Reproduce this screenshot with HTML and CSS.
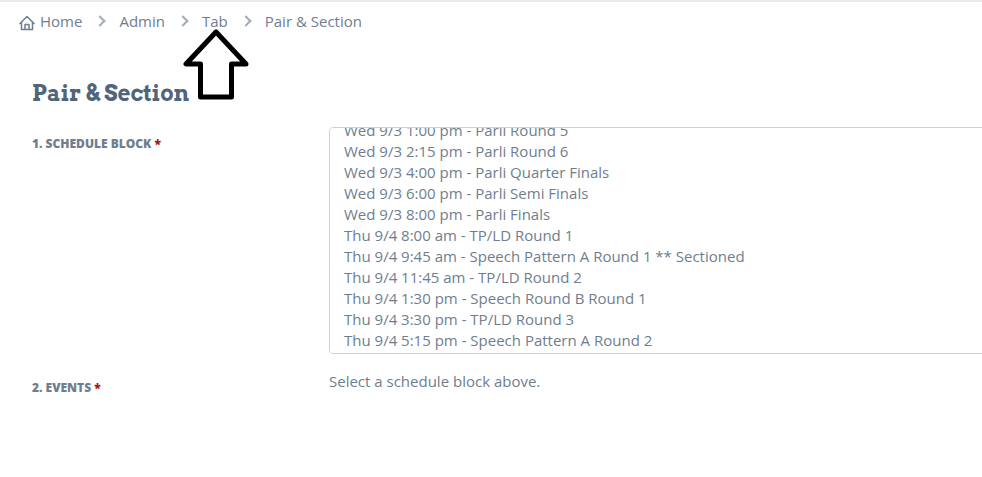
FILE: index.html
```html
<!DOCTYPE html>
<html lang="en">
<head>
  <meta charset="utf-8">
  <title>Pair &amp; Section</title>
  <meta name="viewport" content="width=device-width, initial-scale=1.0">
  <link rel="stylesheet" href="styles.css">
</head>
<body>
  <nav class="breadcrumb" aria-label="Breadcrumb">
    <ol>
      <li>
        <a href="#home">
          <svg class="home-icon" viewBox="0 0 16 16" aria-hidden="true">
            <path d="M1 8.5 L8 1.5 L15 8.5 M2.5 7.5 V14.5 H13.5 V7.500 M6 14 V9.5 H10 V14"/>
          </svg>
          Home
        </a>
      </li>
      <li><a href="#admin">Admin</a></li>
      <li class="marked">
        <a href="#tab">Tab</a>
        <svg class="arrow" viewBox="0 0 66 71" aria-hidden="true">
          <path d="M33 3 L3 35 H17.5 V68 H48.5 V35 H63 Z"/>
        </svg>
      </li>
      <li>Pair &amp; Section</li>
    </ol>
  </nav>

  <main class="content">
    <h1>Pair &amp; Section</h1>
    <form>
      <div class="form-row">
        <label for="scheduleBlock">1. Schedule Block <span class="required">*</span></label>
        <select id="scheduleBlock" class="schedule" multiple>
          <option>Wed 9/3 1:00 pm - Parli Round 5</option>
          <option>Wed 9/3 2:15 pm - Parli Round 6</option>
          <option>Wed 9/3 4:00 pm - Parli Quarter Finals</option>
          <option>Wed 9/3 6:00 pm - Parli Semi Finals</option>
          <option>Wed 9/3 8:00 pm - Parli Finals</option>
          <option>Thu 9/4 8:00 am - TP/LD Round 1</option>
          <option>Thu 9/4 9:45 am - Speech Pattern A Round 1 ** Sectioned</option>
          <option>Thu 9/4 11:45 am - TP/LD Round 2</option>
          <option>Thu 9/4 1:30 pm - Speech Round B Round 1</option>
          <option>Thu 9/4 3:30 pm - TP/LD Round 3</option>
          <option>Thu 9/4 5:15 pm - Speech Pattern A Round 2</option>
        </select>
      </div>
      <div class="form-row">
        <label for="events">2. Events <span class="required">*</span></label>
        <output id="events">Select a schedule block above.</output>
      </div>
    </form>
  </main>

  <script>
    // show the latest blocks first
    var block = document.getElementById('scheduleBlock');
    block.scrollTop = block.scrollHeight;
  </script>
</body>
</html>
```

FILE: styles.css
```css
* {
  box-sizing: border-box;
}

body {
  margin: 0;
  border-top: 2px solid #ebebeb;
  background: #fff;
  color: #6f7e8e;
  font-family: "Open Sans", "Noto Sans", sans-serif;
  font-size: 15px;
  line-height: 20px;
  overflow-x: hidden;
}

a {
  color: inherit;
  text-decoration: none;
}

/* breadcrumb */
.breadcrumb ol {
  display: flex;
  margin: 0;
  padding: 9px 19px 0;
  list-style: none;
}

.breadcrumb li {
  display: flex;
  align-items: center;
}

.breadcrumb li + li::before {
  content: "";
  width: 6px;
  height: 6px;
  margin: 0 15px 0 14px;
  border-top: 2px solid #a3adb7;
  border-right: 2px solid #a3adb7;
  transform: rotate(45deg);
}

.breadcrumb a {
  display: flex;
  align-items: center;
  gap: 5px;
}

.home-icon {
  width: 16px;
  height: 16px;
  margin-top: 3px;
  fill: none;
  stroke: currentColor;
  stroke-width: 1.5;
  stroke-linejoin: round;
  stroke-linecap: round;
}

.marked {
  position: relative;
}

/* pointer drawn over the page, under the Tab link */
.arrow {
  position: absolute;
  top: 18px;
  right: -21px;
  width: 66px;
  height: 71px;
  fill: #fff;
  stroke: #000;
  stroke-width: 5;
  stroke-linejoin: round;
}

/* form */
.content {
  padding: 48px 0 0 32px;
}

h1 {
  margin: 0 0 20px;
  color: #50657b;
  font-family: Arvo, "DejaVu Serif", serif;
  font-size: 22px;
  font-weight: bold;
  line-height: 28px;
}

.form-row {
  display: grid;
  grid-template-columns: 297px 1fr;
  margin-bottom: 17px;
}

.form-row label {
  padding-top: 7px;
  font-size: 12px;
  font-weight: 800;
  text-transform: uppercase;
}

.required {
  color: #a5151b;
}

.schedule {
  height: 227px;
  margin-right: -20px;
  padding: 0 12px 2px;
  border: 1px solid #ced2d8;
  border-radius: 4px;
  background: #fff;
  color: inherit;
  font: inherit;
  scrollbar-width: none;
}
```
